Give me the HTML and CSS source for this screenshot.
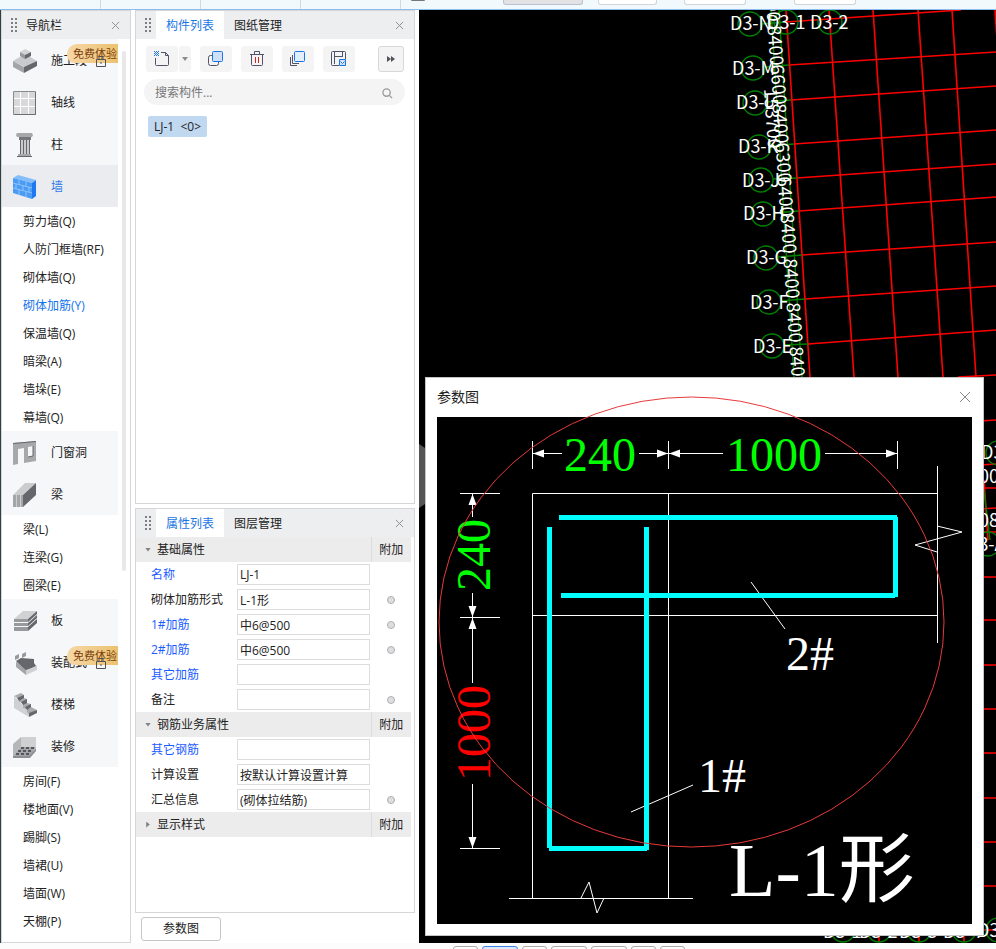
FILE: index.html
```html
<!DOCTYPE html>
<html lang="zh-CN">
<head>
    <meta charset="UTF-8">
    <meta name="viewport" content="width=device-width, initial-scale=1.0">
    <title>参数图</title>
    <link rel="stylesheet" href="styles.css">
</head>
<body>
    <header class="ribbon">
        <div class="ribbon-cell"></div>
        <div class="ribbon-cell"></div>
        <div class="ribbon-cell"></div>
        <div class="ribbon-cell"></div>
        <div class="ribbon-tools">
            <span class="tool mark"></span>
            <span class="tool pressed"></span>
            <span class="tool small"></span>
            <span class="tool"></span>
            <span class="tool last"></span>
        </div>
    </header>

    <main class="workspace">
        <nav class="panel nav">
            <div class="panel-head">
                <span class="grip"></span>
                <span class="nav-title">导航栏</span>
                <button class="close" aria-label="关闭"><svg viewBox="0 0 10 10"><path d="M1 1l8 8M9 1l-8 8"/></svg></button>
            </div>
            <div class="nav-body">
                <div class="nav-list">
                    <a class="group" href="#">
                        <svg class="nav-icon" viewBox="0 0 24 24"><path fill="#c9cacc" d="M0 12l12-7 12 7-12 6z"/><path fill="#a3a5a8" d="M0 12l11 6v6L0 18z"/><path fill="#65676d" d="M24 12l-13 6v6l13-7z"/><path fill="#d2d3d5" d="M7 3l5-3 6 3-6 3z"/><path fill="#95979a" d="M7 3l5 3v4L7 7z"/><path fill="#65676d" d="M18 3l-6 3v4l6-3z"/></svg>
                        <span>施工段</span>
                        <span class="badge">免费体验</span>
                        <svg class="lock" viewBox="0 0 10 12"><path d="M3 4.500V1.500h4v3M.5 4.500h9v7h-9zM5 7v2"/></svg>
                    </a>
                    <a class="group" href="#">
                        <svg class="nav-icon" viewBox="0 0 24 24"><path fill="#d8d8da" stroke="#8c8c8e" d="M.5.5h22v23H.5z"/><path fill="none" stroke="#fff" d="M1 7.500h21M1 15.500h21M7.500 1v22M15.500 1v22"/><path fill="none" stroke="#6c6e72" d="M22.500 1v22.500H1"/></svg>
                        <span>轴线</span>
                    </a>
                    <a class="group" href="#">
                        <svg class="nav-icon" viewBox="0 0 24 24"><path fill="#a6a8aa" d="M4 0h15l1 2-1 2H4L3 2z"/><path fill="#74767a" d="M6 4h12v3H6z"/><path fill="#c9cacc" d="M7 7h10v14H7z"/><path stroke="#65676d" d="M7.500 7v14M10.500 7v14M13.500 7v14M16.500 7v14"/><path fill="#a6a8aa" d="M5 21h13v2H5z"/><path fill="#65676d" d="M4 23h15v1H4z"/></svg>
                        <span>柱</span>
                    </a>
                    <a class="group selected" href="#">
                        <svg class="nav-icon" viewBox="0 0 24 24"><path fill="#85bdf8" d="M0 3l5-3 18 5-4 3z"/><path fill="#4a9bf5" d="M0 3l19 5v16L0 18z"/><path fill="#1f78f0" d="M23 5l-4 3v16l4-3z"/><path fill="none" stroke="#8ec4fa" d="M0 8l19 5M0 13l19 5M6 5v5M13 7v5M3 9v5M10 11v5M16 12v5M6 15v5M13 17v5"/></svg>
                        <span>墙</span>
                    </a>
                    <a class="item" href="#">剪力墙(Q)</a>
                    <a class="item" href="#">人防门框墙(RF)</a>
                    <a class="item" href="#">砌体墙(Q)</a>
                    <a class="item selected" href="#">砌体加筋(Y)</a>
                    <a class="item" href="#">保温墙(Q)</a>
                    <a class="item" href="#">暗梁(A)</a>
                    <a class="item" href="#">墙垛(E)</a>
                    <a class="item" href="#">幕墙(Q)</a>
                    <a class="group" href="#">
                        <svg class="nav-icon" viewBox="0 0 24 24"><path fill="#a6a8aa" fill-rule="evenodd" d="M0 2l23-2v20l-12 2V7L5 8v15l-5 1zM15 6v10l5-1V5z"/><path fill="none" stroke="#65676d" d="M0 2.500L23 .5M15 16l5-1V5"/></svg>
                        <span>门窗洞</span>
                    </a>
                    <a class="group" href="#">
                        <svg class="nav-icon" viewBox="0 0 24 24"><path fill="#cbccce" d="M0 12L12 0h11L10 12z"/><path fill="#a3a5a8" d="M0 12h10v12H0z"/><path fill="#65676d" d="M10 12L23 0v12L10 24z"/><path stroke="#cbccce" d="M3.500 12v12M7.500 12v12"/></svg>
                        <span>梁</span>
                    </a>
                    <a class="item" href="#">梁(L)</a>
                    <a class="item" href="#">连梁(G)</a>
                    <a class="item" href="#">圈梁(E)</a>
                    <a class="group" href="#">
                        <svg class="nav-icon" viewBox="0 0 24 24"><path fill="#d0d1d3" d="M1 10l9-8h14l-9 8z"/><path fill="#98999c" d="M1 10h14v3H1zM1 14h14v3H1zM1 18h14v4H1z"/><path fill="#65676d" d="M15 10l9-8v3l-9 8zM15 14l9-8v3l-9 8zM15 18l9-8v4l-9 8z"/></svg>
                        <span>板</span>
                    </a>
                    <a class="group" href="#">
                        <svg class="nav-icon" viewBox="0 0 24 24"><path fill="#cbccce" d="M3 11l13-2 8 6-11 5z"/><path fill="#65676d" d="M3 10l5-3 13 1v4l2 3-10 5z"/><path fill="#a3a5a8" d="M3 11l10 8v5L3 16z"/><path fill="#d0d1d3" d="M13 19l11-4v4l-11 5z"/><path fill="#98999c" d="M2 5l4-2v4L2 9zM9 3l4-2v4L9 7z"/></svg>
                        <span>装配式</span>
                        <span class="badge">免费体验</span>
                        <svg class="lock" viewBox="0 0 10 12"><path d="M3 4.500V1.500h4v3M.5 4.500h9v7h-9zM5 7v2"/></svg>
                    </a>
                    <a class="group" href="#">
                        <svg class="nav-icon" viewBox="0 0 24 24"><path fill="#cfd0d2" d="M1 3l15 16v5L1 15z"/><path fill="#a9abad" d="M1 3l7-3 3 2v3l3 1v4l4 1v3l6 3-8 4-2-2v-3l-4-1V10L6 9V6z"/><path fill="#65676d" d="M4 5l7-3v3L6 8zM8 9l6-3v4l-4 2zM12 14l6-3v3l-4 3zM16 20l8-3v3l-8 4z"/></svg>
                        <span>楼梯</span>
                    </a>
                    <a class="group" href="#">
                        <svg class="nav-icon" viewBox="0 0 24 24"><path fill="#b4b6b8" d="M0 9l8-7v10L0 21z"/><path fill="#cfd0d2" d="M8 2h15v10H8z"/><path fill="#a3a5a8" d="M0 21l8-9h15l-6 9z"/><path fill="none" stroke="#55575c" stroke-width="2" stroke-dasharray="3 2" d="M8 13h13M5 16h14M3 19h14"/><path fill="#8c8e92" d="M0 21h16l7-8v3l-6 7H0z"/></svg>
                        <span>装修</span>
                    </a>
                    <a class="item" href="#">房间(F)</a>
                    <a class="item" href="#">楼地面(V)</a>
                    <a class="item" href="#">踢脚(S)</a>
                    <a class="item" href="#">墙裙(U)</a>
                    <a class="item" href="#">墙面(W)</a>
                    <a class="item" href="#">天棚(P)</a>
                </div>
                <div class="scrollbar"></div>
            </div>
        </nav>

        <div class="side">
            <section class="panel components">
                <div class="panel-head">
                    <span class="grip"></span>
                    <button class="tab active">构件列表</button>
                    <button class="tab">图纸管理</button>
                    <button class="close" aria-label="关闭"><svg viewBox="0 0 10 10"><path d="M1 1l8 8M9 1l-8 8"/></svg></button>
                </div>
                <div class="toolbar">
                    <div class="split">
                        <button class="tool-btn" aria-label="新建"><svg viewBox="0 0 18 18"><path d="M8 2.500h4.500l3 3v9q0 1-1 1h-11q-1 0-1-1V8M12.500 2.500v3h3"/><path class="blue" stroke-dasharray="1 1" d="M1 1.500h5M2 2.500h4M1 3.500h5M2 4.500h4M1 5.500h5"/></svg></button>
                        <button class="drop-btn" aria-label="更多新建"><svg viewBox="0 0 6 4"><path fill="#8a8c90" d="M0 0h6L3 4z"/></svg></button>
                    </div>
                    <button class="tool-btn" aria-label="复制"><svg viewBox="0 0 18 18"><path d="M6 5.500H3.500q-2 0-2 2v6q0 2 2 2h6q2 0 2-2v-2"/><rect class="blue" fill="#cfdff5" x="5.500" y="1.500" width="10" height="10" rx="1"/></svg></button>
                    <button class="tool-btn" aria-label="删除"><svg viewBox="0 0 18 18"><path d="M2 4.500h14M6.500 4.500v-3h5v3M3.500 5v9.500q0 1 1 1h9q1 0 1-1V5"/><path class="red" d="M7.500 7v6M10.500 7v6"/></svg></button>
                    <button class="tool-btn" aria-label="层间复制"><svg viewBox="0 0 18 18"><path d="M1.500 7v8.500H8M3.500 5v8.500H10"/><rect class="blue" fill="#e3eefc" x="5.500" y="1.500" width="10" height="10" rx="1"/></svg></button>
                    <button class="tool-btn" aria-label="存档"><svg viewBox="0 0 18 18"><path d="M9 15.500H2.500q-1 0-1-1v-12q0-1 1-1h12q1 0 1 1V9M4.500 2v12M5 6.500h8M12.500 2v5"/><path class="blue" fill="#cfdff5" d="M9.500 9.500h6v6h-6zM10.500 11.500l2 2 2-2"/></svg></button>
                    <button class="tool-btn more" aria-label="展开"><svg viewBox="0 0 8 6"><path fill="#50525a" d="M0 0l4 3-4 3zM4 0l4 3-4 3z"/></svg></button>
                </div>
                <div class="search">
                    <input type="text" placeholder="搜索构件..." aria-label="搜索构件">
                    <svg viewBox="0 0 12 12"><circle cx="5" cy="5" r="4"/><path d="M8 8l3 3"/></svg>
                </div>
                <button class="component">LJ-1&nbsp; &lt;0&gt;</button>
            </section>

            <section class="panel properties">
                <div class="panel-head">
                    <span class="grip"></span>
                    <button class="tab active">属性列表</button>
                    <button class="tab">图层管理</button>
                    <button class="close" aria-label="关闭"><svg viewBox="0 0 10 10"><path d="M1 1l8 8M9 1l-8 8"/></svg></button>
                </div>
                <table class="props">
                    <colgroup><col class="col-name"><col><col class="col-extra"></colgroup>
                    <tr class="section"><th colspan="2"><button class="fold">基础属性</button></th><th>附加</th></tr>
                    <tr><td class="key"><label for="name">名称</label></td><td><input type="text" id="name" value="LJ-1"></td><td></td></tr>
                    <tr><td><label for="form">砌体加筋形式</label></td><td><input type="text" id="form" value="L-1形"></td><td><input type="checkbox" aria-label="附加形式"></td></tr>
                    <tr><td class="key"><label for="bar1">1#加筋</label></td><td><input type="text" id="bar1" value="中6@500"></td><td><input type="checkbox" aria-label="附加1#加筋"></td></tr>
                    <tr><td class="key"><label for="bar2">2#加筋</label></td><td><input type="text" id="bar2" value="中6@500"></td><td><input type="checkbox" aria-label="附加2#加筋"></td></tr>
                    <tr><td class="key"><label for="other">其它加筋</label></td><td><input type="text" id="other"></td><td></td></tr>
                    <tr><td><label for="note">备注</label></td><td><input type="text" id="note"></td><td><input type="checkbox" aria-label="附加备注"></td></tr>
                    <tr class="section"><th colspan="2"><button class="fold">钢筋业务属性</button></th><th>附加</th></tr>
                    <tr><td class="key"><label for="steel">其它钢筋</label></td><td><input type="text" id="steel"></td><td></td></tr>
                    <tr><td><label for="calc">计算设置</label></td><td><input type="text" id="calc" value="按默认计算设置计算"></td><td></td></tr>
                    <tr><td><label for="summary">汇总信息</label></td><td><input type="text" id="summary" value="(砌体拉结筋)"></td><td><input type="checkbox" aria-label="附加汇总信息"></td></tr>
                    <tr class="section"><th colspan="2"><button class="fold closed">显示样式</button></th><th>附加</th></tr>
                </table>
            </section>
            <button class="param-btn">参数图</button>
        </div>

        <div class="canvas">
            <svg class="plan" viewBox="419 10 577 933" preserveAspectRatio="xMinYMin slice">
                <!-- axis grid -->
                <g class="axis">
                    <path d="M786 10L810 377M829 10L854 377M873 10L898 377M918 10L943 377M952 10L976 377M995 10L1020 377"/>
                    <path d="M786 22L961 10M789 65L996 52M791 100L996 86M794 144L996 130M797 178L996 164M799 211L996 197M802 255L996 242M805 299L996 286M808 344L996 330M958 377L996 375"/>
                    <path d="M980 421L996 420M980 465L996 464M980 488H996M980 509L996 508M980 532H996M980 577H996M980 620H996M980 665H996M980 709H996M980 753H996M980 798H996M980 842H996M980 886H996M980 930H996M984 480L988 540M879 930v12M919 930v12M964 930v12"/>
                </g>
                <g class="mark-line">
                    <path d="M771 10L794 377M779 10L802 377M762 24L786 22M765 67L789 65M767 102L791 100M771 146L794 144M773 179L797 178M776 213L799 211M778 257L802 255M781 301L805 299M784 345L808 344M984 490L990 540"/>
                    <circle cx="750" cy="24" r="12"/>
                    <circle cx="753" cy="68" r="12"/>
                    <circle cx="755" cy="103" r="12"/>
                    <circle cx="759" cy="147" r="12"/>
                    <circle cx="761" cy="180" r="12"/>
                    <circle cx="763" cy="214" r="12"/>
                    <circle cx="766" cy="258" r="12"/>
                    <circle cx="769" cy="302" r="12"/>
                    <circle cx="772" cy="346" r="12"/>
                    <circle cx="786" cy="22" r="12"/>
                    <circle cx="830" cy="22" r="12"/>
                    <circle cx="998" cy="453" r="12"/>
                    <circle cx="988" cy="544" r="12"/>
                    <circle cx="998" cy="930" r="12"/>
                    <circle cx="843" cy="930" r="12"/>
                    <circle cx="879" cy="930" r="12"/>
                    <circle cx="919" cy="930" r="12"/>
                    <circle cx="964" cy="930" r="12"/>
                </g>
                <g class="axis-text">
                    <text x="730" y="30">D3-N</text>
                    <text x="767" y="29">D3-1</text>
                    <text x="810" y="29">D3-2</text>
                    <text x="732" y="75">D3-M</text>
                    <text x="736" y="109">D3-L</text>
                    <text x="738" y="153">D3-K</text>
                    <text x="742" y="187">D3-J</text>
                    <text x="743" y="220">D3-H</text>
                    <text x="746" y="264">D3-G</text>
                    <text x="750" y="309">D3-F</text>
                    <text x="753" y="353">D3-E</text>
                    <text x="981" y="459">D3-N</text>
                    <text x="979" y="483">00</text>
                    <text x="979" y="527">08</text>
                    <text x="966" y="551">D3-A</text>
                    <text x="823" y="938">D3-1</text>
                    <text x="859" y="938">D3-2</text>
                    <text x="899" y="938">D3-3</text>
                    <text x="943" y="938">D3-4</text>
                    <text x="977" y="937">D3-5</text>
                </g>
                <g class="axis-text dims">
                    <text transform="translate(766 2) rotate(86)">8400</text>
                    <text transform="translate(769 46) rotate(86)">8400</text>
                    <text transform="translate(772 85) rotate(86)">6600</text>
                    <text transform="translate(774 124) rotate(86)">8400</text>
                    <text transform="translate(777 163) rotate(86)">6300</text>
                    <text transform="translate(779 197) rotate(86)">6400</text>
                    <text transform="translate(782 234) rotate(86)">8400</text>
                    <text transform="translate(785 279) rotate(86)">8400</text>
                    <text transform="translate(788 323) rotate(86)">8400</text>
                    <text transform="translate(791 367) rotate(86)">8400</text>
                    <text transform="translate(766 119) rotate(86)">153700</text>
                </g>
                <path fill="#555" d="M419 444l6 4v56l-6 4z"/>
            </svg>

            <div class="dialog">
                <div class="dialog-head">
                    <span>参数图</span>
                    <button class="dialog-close" aria-label="关闭"><svg viewBox="0 0 12 12"><path d="M1 1l10 10M11 1L1 11"/></svg></button>
                </div>
                <svg class="drawing" viewBox="437 417 535 507" preserveAspectRatio="xMinYMin">
                    <rect x="437" y="417" width="535" height="507"/>
                    <!-- wall outline and break lines -->
                    <g class="outline">
                        <path d="M532.500 898V493.500H937M532 615.500H937M668.500 493V898M937.500 466V643M509 898.500H693"/>
                        <path d="M937 526L962 532L915 545L937 552M581 898L589 882L597 913L604 898"/>
                        <path d="M751 582L785 629M631 812L693 785"/>
                        <path d="M532.500 441V469M668.500 441V469M897.500 441V469M532 453.500H562M639 453.500H723M825 453.500H897"/>
                        <path d="M460 493.500H500M460 617.500H500M460 848.500H500M472.500 493V517M472.500 593V683M472.500 784V848"/>
                    </g>
                    <path class="arrows" d="M533 453.500l11-4v8zM668 453.500l-11-4v8zM669 453.500l11-4v8zM897 453.500l-11-4v8zM472.500 494l-4 11h8zM472.500 617l-4-11h8zM472.500 618l-4 11h8zM472.500 848l-4-11h8z"/>
                    <!-- rebar -->
                    <path class="rebar" d="M559 517.500H897M895.500 517V597M895 595.500H561M549.500 527V848M549 848.500H647M646.500 850V527"/>
                    <g class="green">
                        <text x="564" y="471">240</text>
                        <text x="726" y="471">1000</text>
                        <text transform="translate(490 591) rotate(-90)">240</text>
                    </g>
                    <text class="red-text" transform="translate(490 781) rotate(-90)">1000</text>
                    <text x="786" y="670">2#</text>
                    <text x="698" y="792">1#</text>
                    <text class="caption" x="729" y="896">L-1形</text>
                    <ellipse cx="691.500" cy="622" rx="252.500" ry="225"/>
                </svg>
            </div>
        </div>
    </main>

    <footer class="statusbar">
        <span class="chip narrow"></span>
        <span class="chip on"></span>
        <span class="chip narrow"></span>
        <span class="chip"></span>
        <span class="chip"></span>
        <span class="chip narrow"></span>
        <span class="chip narrow"></span>
    </footer>
</body>
</html>
```

FILE: styles.css
```css
* {
    box-sizing: border-box;
}
body {
    display: flex;
    flex-direction: column;
    height: 100vh;
    margin: 0;
    overflow: hidden;
    background-color: #fcfcfc;
    color: #222;
    font-family: "Open Sans", "Noto Sans CJK SC", sans-serif;
    font-size: 12px;
    line-height: 20px;
}
button, input {
    font: inherit;
    color: inherit;
    margin: 0;
}
button {
    border: none;
    background: none;
    padding: 0;
    cursor: pointer;
}
a {
    color: inherit;
    text-decoration: none;
}
svg {
    display: block;
}

/* top strip */
.ribbon {
    display: flex;
    flex: none;
    height: 10px;
    overflow: hidden;
    background-color: #f2f9fd;
    border-bottom: 1px solid #8abcf0;
}
.ribbon-cell {
    width: 100px;
    border-right: 1px solid #d4d8dc;
}
.ribbon-cell:first-child {
    width: 101px;
}
.ribbon-tools {
    display: flex;
    flex: 1;
    padding-left: 10px;
}
.tool {
    width: 62px;
    height: 5px;
    margin-right: 48px;
    background-color: #fff;
    border: 1px solid #d2d4d8;
    border-top: none;
    border-radius: 0 0 3px 3px;
}
.tool.mark {
    width: 14px;
    height: 1px;
    margin-right: 78px;
    background-color: #777;
    border: none;
}
.tool.pressed {
    width: 80px;
    margin-right: 15px;
    background-color: #e2e2e5;
    border-color: #b9c2d2;
}
.tool.small {
    width: 59px;
    margin-right: 27px;
}

.workspace {
    display: flex;
    flex: 1;
    min-height: 0;
    border-left: 1px solid #2f4146;
    background-color: #fff;
}
.panel {
    background-color: #fff;
    border: 1px solid #d6d6d8;
}
.panel-head {
    display: flex;
    align-items: center;
    height: 28px;
    padding-left: 9px;
    background-color: #edeef0;
}
.grip {
    width: 6px;
    height: 14px;
    margin-right: 5px;
    background-image: radial-gradient(circle at 1px 1px, #7c7e84 1px, transparent 1px);
    background-size: 4px 4px;
}
.close {
    margin: 0 10px 0 auto;
}
.close svg {
    width: 9px;
    height: 9px;
}
.close path, .dialog-close path {
    fill: none;
    stroke: #888;
}

/* navigation */
.nav {
    display: flex;
    flex-direction: column;
    flex: none;
    width: 130px;
}
.nav .panel-head {
    flex: none;
}
.nav-title {
    margin-left: 4px;
    padding-top: 2px;
}
.nav-body {
    display: flex;
    flex: 1;
    min-height: 0;
}
.nav-list {
    width: 116px;
}
.group {
    position: relative;
    display: flex;
    align-items: center;
    height: 42px;
    padding: 2px 0 0 11px;
    background-color: #f5f7f9;
}
.group.selected {
    background-color: #ebecf0;
    color: #2f7be6;
}
.nav-icon {
    width: 24px;
    height: 24px;
    margin-right: 14px;
}
.item {
    display: block;
    height: 28px;
    padding-left: 21px;
    line-height: 30px;
}
.item.selected {
    color: #1072ec;
}
.badge {
    position: absolute;
    top: 5px;
    right: 0;
    height: 19px;
    padding: 0 1px 0 6px;
    border-radius: 10px 0 0 8px;
    background-image: linear-gradient(90deg, #f6d7a6, #ecc26f);
    color: #7a3d0c;
    font-size: 11px;
    line-height: 20px;
}
.lock {
    position: absolute;
    top: 16px;
    right: 12px;
    width: 10px;
    height: 12px;
    fill: none;
    stroke: #4f5358;
}
.scrollbar {
    width: 4px;
    height: 520px;
    margin: 12px 0 0 4px;
    border-radius: 2px;
    background-color: #e8e8e9;
}

/* middle column */
.side {
    display: flex;
    flex-direction: column;
    flex: none;
    width: 280px;
    margin: 0 4px;
}
.components {
    height: 494px;
    margin-bottom: 4px;
}
.properties {
    flex: 1;
}
.tab {
    height: 28px;
    padding: 2px 10px 0;
}
.tab.active {
    background-color: #fff;
    color: #1b76e5;
}
.toolbar {
    display: flex;
    gap: 9px;
    margin: 7px 10px;
}
.split {
    display: flex;
    gap: 1px;
}
.tool-btn, .drop-btn {
    display: flex;
    align-items: center;
    justify-content: center;
    width: 32px;
    height: 26px;
    border-radius: 3px;
    background-color: #f4f4f5;
}
.drop-btn {
    width: 12px;
}
.drop-btn svg {
    width: 6px;
    height: 4px;
}
.tool-btn svg {
    width: 18px;
    height: 18px;
    fill: none;
    stroke: #50546a;
}
.tool-btn .blue {
    stroke: #1b76e5;
}
.tool-btn .red {
    stroke: #e02020;
}
.tool-btn.more {
    width: 26px;
    margin-left: auto;
    border: 1px solid #d8d8da;
}
.tool-btn.more svg {
    width: 8px;
    height: 6px;
    stroke: none;
}
.search {
    display: flex;
    align-items: center;
    height: 26px;
    margin: 0 9px 11px 8px;
    padding: 2px 12px 0 11px;
    border-radius: 13px;
    background-color: #f4f4f5;
}
.search input {
    flex: 1;
    min-width: 0;
    padding: 0;
    border: none;
    background: none;
}
.search input::placeholder {
    color: #777;
}
.search svg {
    width: 11px;
    height: 11px;
    fill: none;
    stroke: #999;
    stroke-width: 1.4;
}
.component {
    display: block;
    min-width: 59px;
    height: 21px;
    margin-left: 12px;
    padding: 0 4px;
    border-radius: 2px;
    background-color: #c1d8f1;
}
.props {
    width: 275px;
    table-layout: fixed;
    border-collapse: collapse;
}
.col-name {
    width: 101px;
}
.col-extra {
    width: 40px;
}
.props tr {
    height: 25px;
}
.props td, .props th {
    padding: 0;
    font-weight: normal;
    text-align: left;
}
.props td:first-child {
    padding-left: 15px;
}
.props .key {
    color: #1a5cff;
}
.props td:last-child, .props th:last-child {
    text-align: center;
}
.section {
    background-color: #ececed;
}
.section th + th {
    border-left: 1px solid #dcdcde;
}
.fold {
    display: flex;
    align-items: center;
    gap: 6px;
    padding-left: 9px;
}
.fold::before {
    content: "";
    width: 6px;
    height: 4px;
    background-color: #808286;
    clip-path: polygon(0 0, 100% 0, 50% 100%);
}
.fold.closed::before {
    clip-path: polygon(20% 0, 80% 50%, 20% 100%);
    height: 6px;
}
.props input[type="text"] {
    display: block;
    width: 133px;
    height: 21px;
    padding: 0 2px;
    border: 1px solid #dcdcde;
    background-color: #fff;
}
.props input[type="checkbox"] {
    display: block;
    width: 8px;
    height: 8px;
    margin: 0 auto;
    appearance: none;
    border: 1px solid #b0b0b4;
    border-radius: 4px;
    background-color: #dedee1;
}
.param-btn {
    width: 80px;
    height: 24px;
    margin: 4px 0 2px 6px;
    border: 1px solid #c6c6c8;
    border-radius: 3px;
    background-color: #fff;
}

/* drawing area */
.canvas {
    position: relative;
    flex: 1;
    min-width: 0;
    overflow: hidden;
    background-color: #000;
}
.plan {
    width: 100%;
    height: 100%;
}
.axis {
    fill: none;
    stroke: #f00;
    stroke-width: 1.6;
}
.mark-line {
    fill: none;
    stroke: #008000;
    stroke-width: 1.4;
}
.axis-text {
    fill: #fff;
    font-family: "Noto Sans CJK SC", sans-serif;
    font-size: 18px;
}
.dims {
    text-anchor: middle;
}
.dialog {
    position: absolute;
    top: 367px;
    right: 12px;
    bottom: 7px;
    left: 6px;
    display: flex;
    flex-direction: column;
    padding: 0 11px 11px;
    border: 1px solid #c4c4c4;
    background-color: #fff;
}
.dialog-head {
    display: flex;
    flex: none;
    align-items: center;
    justify-content: space-between;
    height: 39px;
    padding-bottom: 2px;
    font-size: 14px;
}
.dialog-close svg {
    width: 12px;
    height: 12px;
    margin-right: 1px;
}
.drawing {
    flex: 1;
    min-height: 0;
    overflow: visible;
}
.outline {
    fill: none;
    stroke: #fff;
}
.arrows {
    fill: #fff;
}
.rebar {
    fill: none;
    stroke: #0ff;
    stroke-width: 5;
}
.drawing text {
    fill: #fff;
    font-family: "Liberation Serif", "Noto Sans CJK SC", serif;
    font-size: 48px;
}
.drawing .green text {
    fill: #0f0;
}
.drawing .red-text {
    fill: #f00;
}
.drawing .caption {
    font-size: 76px;
}
.drawing ellipse {
    fill: none;
    stroke: #e83a3a;
}

/* bottom strip */
.statusbar {
    display: flex;
    flex: none;
    gap: 4px;
    height: 6px;
    padding: 3px 0 0 453px;
    overflow: hidden;
}
.chip {
    width: 36px;
    height: 8px;
    border: 1px solid #aaa;
    border-radius: 3px;
    background-color: #fff;
}
.chip.narrow {
    width: 25px;
}
.chip.on {
    border-color: #3a82e4;
    background-color: #dce9fa;
}
```
